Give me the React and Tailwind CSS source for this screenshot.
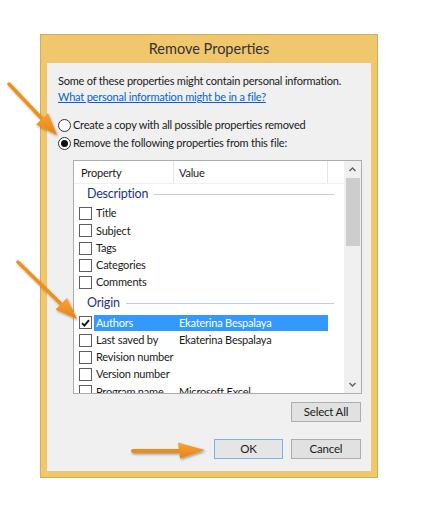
import React from 'react';

const descriptionRows = [
    { name: 'Title' },
    { name: 'Subject' },
    { name: 'Tags' },
    { name: 'Categories' },
    { name: 'Comments' },
];

const originRows = [
    { name: 'Authors', value: 'Ekaterina Bespalaya', checked: true, selected: true },
    { name: 'Last saved by', value: 'Ekaterina Bespalaya' },
    { name: 'Revision number' },
    { name: 'Version number' },
    { name: 'Program name', value: 'Microsoft Excel' },
];

function Checkbox({ checked }) {
    return (
        <span className="w-[13px] h-[13px] shrink-0 border border-[#5f5f5f] bg-white flex items-center justify-center">
            {checked && (
                <svg width="9" height="8" viewBox="0 0 9 8">
                    <path d="M1 4.2 L3.4 6.6 L8 1.2" fill="none" stroke="#111" strokeWidth="1.8" />
                </svg>
            )}
        </span>
    );
}

function Radio({ checked, label }) {
    return (
        <div className="h-[18px] flex items-center">
            <span className="w-[13px] h-[13px] shrink-0 rounded-full border border-[#333] bg-white flex items-center justify-center">
                {checked && <span className="w-[7px] h-[7px] rounded-full bg-[#111]" />}
            </span>
            <span className="ml-[2px] whitespace-nowrap">{label}</span>
        </div>
    );
}

function GroupHeader({ title, extraTop }) {
    return (
        <div className={`shrink-0 flex items-center pl-[13px] pr-[10px] h-[21px] ${extraTop ? 'mt-[2px]' : ''}`}>
            <span className="text-[#1e3287] text-[12.5px]">{title}</span>
            <span className="flex-1 ml-[6px] h-px bg-[#c3cbe0]" />
        </div>
    );
}

function Row({ row }) {
    return (
        <div className="shrink-0 h-[17.25px] flex items-center pl-[5px]">
            <Checkbox checked={row.checked} />
            <div
                className={`ml-[2px] w-[234px] h-[16px] flex items-center pl-[2px] ${
                    row.selected ? 'bg-[#3399ff] text-white' : 'text-[#1a1a1a]'
                }`}
            >
                <span className="w-[83px] shrink-0 whitespace-nowrap">{row.name}</span>
                {row.value && <span className="whitespace-nowrap">{row.value}</span>}
            </div>
        </div>
    );
}

function Button({ children, primary, className = '' }) {
    return (
        <button
            className={`h-[20px] flex items-center justify-center text-[11.5px] text-[#1a1a1a] border ${
                primary ? 'border-[#7cb2e8] bg-[#e5e5e5]' : 'border-[#adadad] bg-[#e1e1e1]'
            } ${className}`}
        >
            {children}
        </button>
    );
}

function Arrows() {
    return (
        <svg className="absolute inset-0 pointer-events-none" width="424" height="517" viewBox="0 0 424 517">
            <defs>
                <linearGradient id="orange" x1="0" y1="0" x2="0" y2="1">
                    <stop offset="0" stopColor="#f7a43a" />
                    <stop offset="1" stopColor="#e8820f" />
                </linearGradient>
                <filter id="shadow" x="-20%" y="-20%" width="140%" height="140%">
                    <feDropShadow dx="1" dy="1.5" stdDeviation="1.2" floodColor="#000" floodOpacity="0.35" />
                </filter>
            </defs>
            <g filter="url(#shadow)">
                {/* arrow to radio */}
                <line x1="9" y1="84" x2="45" y2="122" stroke="#f0901f" strokeWidth="3.5" strokeLinecap="round" />
                <polygon points="57,135 36,124.5 48,113" fill="url(#orange)" />
                {/* arrow to Authors */}
                <line x1="18" y1="262" x2="63" y2="306" stroke="#f0901f" strokeWidth="3.5" strokeLinecap="round" />
                <polygon points="77,319 55.5,309.5 67,298" fill="url(#orange)" />
                {/* arrow to OK */}
                <line x1="133" y1="451" x2="182" y2="451" stroke="#ec8c1c" strokeWidth="4" strokeLinecap="round" />
                <polygon points="205,450 178,442.5 180,458.5" fill="url(#orange)" />
            </g>
        </svg>
    );
}

export default function App() {
    return (
        <div className="relative w-[424px] h-[517px] bg-white overflow-hidden font-['Lato','Noto_Sans',sans-serif] text-[11px] tracking-[-0.2px] text-[#1a1a1a]">
            <div className="ml-[40px] mt-[34px] w-[338px] h-[444px] bg-[#f1c76d] border border-[#d8ac55] flex flex-col">
                <div className="h-[28px] flex items-center justify-center text-[14.5px] tracking-normal text-[#333]">Remove Properties</div>

                <div className="mx-[6px] mb-[6px] flex-1 bg-[#f0f0f0] flex flex-col">
                    <div className="pl-[11px] pt-[10px]">
                        <div className="h-[16px] leading-[16px] whitespace-nowrap">Some of these properties might contain personal information.</div>
                        <div className="h-[16px] leading-[16px] text-[#0066cc] underline whitespace-nowrap">What personal information might be in a file?</div>
                        <div className="mt-[11px]">
                            <Radio label="Create a copy with all possible properties removed" />
                            <Radio checked label="Remove the following properties from this file:" />
                        </div>
                    </div>

                    {/* property list */}
                    <div className="mt-[8px] ml-[26px] w-[289px] h-[234px] border border-[#abadb3] bg-white flex overflow-hidden">
                        <div className="flex-1 flex flex-col overflow-hidden">
                            <div className="h-[23px] shrink-0 flex border-b border-[#f0f0f0]">
                                <div className="w-[100px] pl-[7px] pt-[3px] flex items-center border-r border-[#e5e5e5]">Property</div>
                                <div className="w-[154px] pl-[5px] pt-[3px] flex items-center border-r border-[#e5e5e5]">Value</div>
                                <div className="flex-1" />
                            </div>
                            <GroupHeader title="Description" />
                            {descriptionRows.map((r) => (
                                <Row key={r.name} row={r} />
                            ))}
                            <GroupHeader title="Origin" extraTop />
                            {originRows.map((r) => (
                                <Row key={r.name} row={r} />
                            ))}
                        </div>

                        {/* scrollbar */}
                        <div className="w-[17px] shrink-0 bg-[#f0f0f0] flex flex-col items-center">
                            <div className="h-[17px] w-full flex items-center justify-center">
                                <svg width="7" height="5" viewBox="0 0 7 5">
                                    <path d="M0.5 4 L3.5 1 L6.5 4" fill="none" stroke="#606060" strokeWidth="1.4" />
                                </svg>
                            </div>
                            <div className="w-[14px] h-[68px] bg-[#cdcdcd]" />
                            <div className="flex-1" />
                            <div className="h-[17px] w-full flex items-center justify-center">
                                <svg width="7" height="5" viewBox="0 0 7 5">
                                    <path d="M0.5 1 L3.5 4 L6.5 1" fill="none" stroke="#606060" strokeWidth="1.4" />
                                </svg>
                            </div>
                        </div>
                    </div>

                    <div className="mt-[8px] mr-[10px] flex justify-end">
                        <Button className="w-[70px]">Select All</Button>
                    </div>
                    <div className="mt-[17px] mr-[10px] flex justify-end gap-[8px]">
                        <Button primary className="w-[69px]">OK</Button>
                        <Button className="w-[70px]">Cancel</Button>
                    </div>
                </div>
            </div>
            <Arrows />
        </div>
    );
}
